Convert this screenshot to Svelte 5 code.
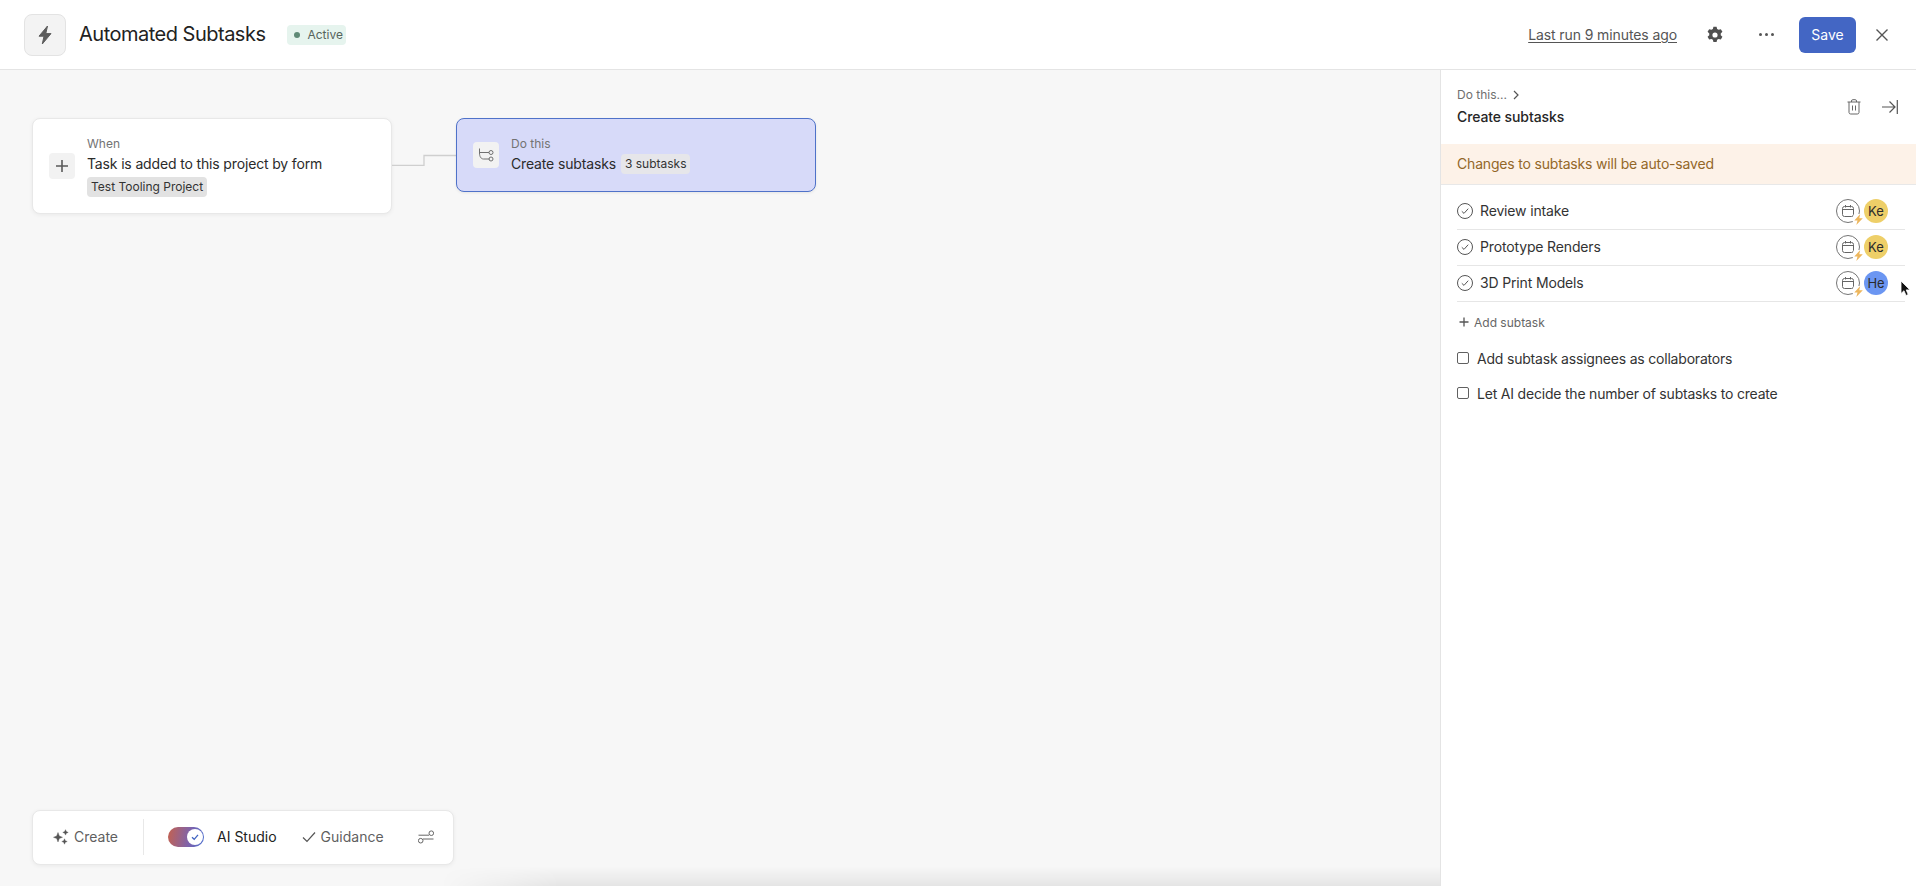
<script>
  const subtasks = [
    { name: 'Review intake', who: 'Ke', color: '#eecf68' },
    { name: 'Prototype Renders', who: 'Ke', color: '#eecf68' },
    { name: '3D Print Models', who: 'He', color: '#6b96f2' }
  ];
  const options = ['Add subtask assignees as collaborators', 'Let AI decide the number of subtasks to create'];
</script>

<div class="page">
  <header class="topbar">
    <div class="app-icon">
      <svg width="18" height="20" viewBox="0 0 18 20"><path d="M11.5 1 3 11.2h5L6.3 19 15 8.6h-5.2z" fill="#5c5c5c" stroke="#5c5c5c" stroke-width="1" stroke-linejoin="round"/></svg>
    </div>
    <h1>Automated Subtasks</h1>
    <span class="badge"><i></i>Active</span>
    <div class="spacer"></div>
    <span class="last-run">Last run 9 minutes ago</span>
    <button class="icon-btn gear" aria-label="Settings">
      <svg width="18" height="18" viewBox="0 0 16 16"><path fill="#4f4f4f" fill-rule="evenodd" d="M6.6.6h2.8l.5 2 1.3.75 2-.57 1.4 2.44-1.5 1.43v1.500l1.500 1.430-1.400 2.440-2-.57-1.300.75-.5 2H6.600l-.5-2-1.300-.75-2 .57-1.400-2.440 1.500-1.430v-1.500L1.400 5.220l1.400-2.440 2 .57 1.300-.75zM8 5.700a2.300 2.300 0 1 0 0 4.600 2.300 2.300 0 0 0 0-4.600z"/></svg>
    </button>
    <button class="icon-btn dots" aria-label="More"><i></i><i></i><i></i></button>
    <button class="save">Save</button>
    <button class="icon-btn close" aria-label="Close">
      <svg width="14" height="14" viewBox="0 0 14 14"><path d="M1.500 1.500l11 11M12.500 1.500l-11 11" stroke="#555" stroke-width="1.400" fill="none"/></svg>
    </button>
  </header>

  <div class="body">
    <main class="canvas">
      <div class="node when">
        <div class="node-icon plus">
          <svg width="14" height="14" viewBox="0 0 14 14"><path d="M7 1v12M1 7h12" stroke="#5a5a5a" stroke-width="1.600"/></svg>
        </div>
        <div class="node-text">
          <div class="label">When</div>
          <div class="main">Task is added to this project by form</div>
          <span class="tag">Test Tooling Project</span>
        </div>
      </div>

      <svg class="wire" width="65" height="12" viewBox="0 0 65 12"><path d="M0 11.500H32V1.500H65" fill="none" stroke="#cfcfcf" stroke-width="1.300"/></svg>

      <div class="node action">
        <div class="node-icon">
          <svg width="16" height="16" viewBox="0 0 16 16" fill="none" stroke="#707070" stroke-width="1"><path d="M1.500 1.500v4.500c0 3.500 1.500 6 4 6h6M1.500 5.500h9.500"/><circle cx="13" cy="5.500" r="2"/><circle cx="13" cy="12" r="2"/></svg>
        </div>
        <div class="node-text">
          <div class="label">Do this</div>
          <div class="main-row">
            <span class="main">Create subtasks</span>
            <span class="tag light">3 subtasks</span>
          </div>
        </div>
      </div>

      <div class="toolbar">
        <span class="tool create">
          <svg width="16" height="16" viewBox="0 0 16 16" fill="#555" stroke="#555" stroke-width=".4"><path d="M5 3.500 6.300 7 9.500 8.300 6.300 9.500 5 13 3.700 9.500.5 8.300 3.700 7zM12.500 .7l.8 1.900 1.900.8-1.900.8-.8 1.900-.8-1.900-1.900-.8 1.900-.8zM11.500 9.800l.8 1.900 1.900.8-1.900.8-.8 1.900-.8-1.900-1.900-.8 1.900-.8z"/></svg>
          Create
        </span>
        <span class="divider"></span>
        <span class="toggle">
          <span class="knob">
            <svg width="10" height="10" viewBox="0 0 10 10"><path d="M2 5.300 4.200 7.300 8 2.800" fill="none" stroke="#3f63c2" stroke-width="1.300"/></svg>
          </span>
        </span>
        <span class="studio">AI Studio</span>
        <span class="tool guidance">
          <svg width="14" height="12" viewBox="0 0 14 12"><path d="M1 6.500 5 10.500 13 1.500" fill="none" stroke="#555" stroke-width="1.200"/></svg>
          Guidance
        </span>
        <svg class="sliders" width="16" height="14" viewBox="0 0 16 14" fill="none" stroke="#666" stroke-width="1"><path d="M.5 5.200H11M5 9h10.500"/><circle cx="13.300" cy="3.200" r="2.300"/><circle cx="2.700" cy="10.700" r="2.300"/></svg>
      </div>

      <div class="bottom-shade"></div>
    </main>

    <aside class="panel">
      <div class="panel-head">
        <div class="head-text">
          <div class="crumb">
            Do this...
            <svg width="8" height="10" viewBox="0 0 8 10"><path d="M2 1l4 4-4 4" fill="none" stroke="#555" stroke-width="1.200"/></svg>
          </div>
          <div class="panel-title">Create subtasks</div>
        </div>
        <div class="panel-actions">
          <svg width="14" height="16" viewBox="0 0 14 16" fill="none" stroke="#666" stroke-width="1"><path d="M.5 3h13M4.500 3V2a1.300 1.300 0 0 1 1.300-1.300h2.400A1.300 1.300 0 0 1 9.500 2v1M2 3v10.500A1.700 1.700 0 0 0 3.700 15h6.600a1.700 1.700 0 0 0 1.700-1.500V3M5.500 6.500v5M8.500 6.500v5"/></svg>
          <svg width="16" height="14" viewBox="0 0 16 14" fill="none" stroke="#555" stroke-width="1.200"><path d="M0 7h12.500M7.500 1.500 13 7l-5.500 5.500M15.300 0v14"/></svg>
        </div>
      </div>
      <div class="notice">Changes to subtasks will be auto-saved</div>

      <ul class="subtasks">
        {#each subtasks as s}
          <li>
            <svg class="check" width="16" height="16" viewBox="0 0 16 16" fill="none" stroke="#555" stroke-width="1"><circle cx="8" cy="8" r="7.500"/><path d="M4.800 8.300 7 10.400l4.200-4.700"/></svg>
            <span class="name">{s.name}</span>
            <span class="date">
              <svg width="12" height="12" viewBox="0 0 12 12" fill="none" stroke="#666" stroke-width="1"><rect x=".5" y="1.500" width="11" height="10" rx="2"/><path d="M.5 4.500h11M3.500 0v2.500M8.500 0v2.500"/></svg>
              <span class="bolt">
                <svg width="9" height="11" viewBox="0 0 9 11"><path d="M6.200 0 .3 6.500h3.200L2.300 11 8.800 4.200H5.300z" fill="#edb65c"/></svg>
              </span>
            </span>
            <span class="avatar" style="background: {s.color}">{s.who}</span>
          </li>
        {/each}
      </ul>

      <div class="add">
        <svg width="10" height="10" viewBox="0 0 10 10"><path d="M5 .5v9M.5 5h9" stroke="#555" stroke-width="1.300"/></svg>
        Add subtask
      </div>

      <div class="options">
        {#each options as o}
          <label><span class="box"></span>{o}</label>
        {/each}
      </div>

      <svg class="cursor" width="11" height="17" viewBox="0 0 11 17"><path d="M1 1v12.500l3-2.800 2 4.800 2.200-1-2-4.600H10z" fill="#111" stroke="#fff" stroke-width=".8"/></svg>
    </aside>
  </div>
</div>

<style>
  :global(body) {
    margin: 0;
    font-family: Inter, "Liberation Sans", sans-serif;
    color: #262626;
  }

  .page {
    height: 886px;
    width: 1916px;
    display: flex;
    flex-direction: column;
    overflow: hidden;
    background: #fff;
  }

  .topbar {
    height: 69px;
    flex: none;
    display: flex;
    align-items: center;
    padding: 0 29px 0 24px;
    background: #fff;
    border-bottom: 1px solid #e4e4e4;
  }

  .app-icon {
    width: 40px;
    height: 40px;
    border: 1px solid #e3e3e3;
    border-radius: 8px;
    background: #f3f3f3;
    display: flex;
    align-items: center;
    justify-content: center;
    margin-right: 13px;
  }

  h1 {
    margin: 0 0 1px;
    font-size: 20px;
    font-weight: 400;
    letter-spacing: -0.5px;
    color: #222;
  }

  .badge {
    margin-left: 22px;
    height: 20px;
    width: 59px;
    box-sizing: border-box;
    padding-left: 7px;
    display: flex;
    align-items: center;
    gap: 7px;
    background: #e6f4ee;
    border-radius: 4px;
    font-size: 12px;
    color: #56635c;
  }

  .badge i {
    width: 6px;
    height: 6px;
    border-radius: 50%;
    background: #5f8a76;
  }

  .spacer {
    flex: 1;
  }

  .last-run {
    font-size: 14px;
    letter-spacing: -0.1px;
    color: #555;
    text-decoration: underline;
    text-underline-offset: 2px;
    margin-right: 29px;
  }

  .icon-btn {
    border: none;
    background: none;
    padding: 0;
    display: flex;
    align-items: center;
    justify-content: center;
  }

  .dots {
    gap: 3px;
    margin-left: 35px;
    margin-right: 25px;
  }

  .dots i {
    width: 3px;
    height: 3px;
    border-radius: 50%;
    background: #555;
  }

  .save {
    width: 57px;
    height: 36px;
    border: none;
    border-radius: 6px;
    background: #4366c4;
    color: #fff;
    font: 14px Inter, sans-serif;
  }

  .close {
    margin-left: 19px;
    margin-right: -2px;
  }

  .body {
    flex: 1;
    display: flex;
    min-height: 0;
  }

  .canvas {
    flex: 1;
    position: relative;
    background: #f7f7f7;
    overflow: hidden;
  }

  .node {
    position: absolute;
    box-sizing: border-box;
    display: flex;
    align-items: center;
    border-radius: 8px;
  }

  .when {
    left: 32px;
    top: 48px;
    width: 360px;
    height: 96px;
    background: #fff;
    border: 1px solid #e8e8e8;
    box-shadow: 0 1px 4px rgba(0, 0, 0, 0.06);
    padding-left: 16px;
  }

  .action {
    left: 456px;
    top: 48px;
    width: 360px;
    height: 74px;
    background: #d7daf9;
    border: 1px solid #4f72c9;
    box-shadow: 0 1px 3px rgba(0, 0, 0, 0.08);
    padding-left: 16px;
  }

  .wire {
    position: absolute;
    left: 392px;
    top: 84px;
  }

  .node-icon {
    width: 26px;
    height: 26px;
    border-radius: 4px;
    background: #f2f2f2;
    display: flex;
    align-items: center;
    justify-content: center;
    margin-right: 12px;
    flex: none;
  }

  .label {
    font-size: 12px;
    color: #737373;
    line-height: 16px;
  }

  .main {
    font-size: 14px;
    letter-spacing: -0.15px;
    color: #2b2b2b;
    line-height: 22px;
  }

  .when .main {
    margin-top: 1px;
  }

  .main-row {
    display: flex;
    align-items: center;
    gap: 5px;
    margin-top: 1px;
  }

  .tag {
    display: inline-block;
    margin-top: 2px;
    padding: 0 4px;
    height: 20px;
    line-height: 20px;
    border-radius: 4px;
    background: #e2e2e2;
    font-size: 12px;
    color: #333;
  }

  .tag.light {
    background: #e6e6ea;
    margin-top: 0;
  }

  .toolbar {
    position: absolute;
    left: 32px;
    top: 740px;
    width: 422px;
    height: 55px;
    box-sizing: border-box;
    display: flex;
    align-items: center;
    background: #fff;
    border: 1px solid #e8e8e8;
    border-radius: 8px;
    box-shadow: 0 1px 4px rgba(0, 0, 0, 0.06);
    padding: 0 0 2px 20px;
    font-size: 14px;
    color: #5f5f5f;
  }

  .tool {
    display: flex;
    align-items: center;
    gap: 5px;
  }

  .divider {
    width: 1px;
    height: 36px;
    background: #e8e8e8;
    margin: 0 24px 0 25px;
  }

  .toggle {
    width: 36px;
    height: 20px;
    border-radius: 10px;
    background: linear-gradient(100deg, #c4614f, #7d63ad 60%, #4a6fd0);
    position: relative;
    flex: none;
  }

  .knob {
    position: absolute;
    right: 1px;
    top: 2px;
    width: 16px;
    height: 16px;
    border-radius: 50%;
    background: #fff;
    display: flex;
    align-items: center;
    justify-content: center;
  }

  .studio {
    margin-left: 13px;
    color: #222;
  }

  .guidance {
    margin-left: 25px;
  }

  .sliders {
    margin-left: 34px;
  }

  .bottom-shade {
    position: absolute;
    left: 0;
    right: 0;
    bottom: 0;
    height: 20px;
    pointer-events: none;
    background: linear-gradient(to bottom, rgba(0, 0, 0, 0), rgba(0, 0, 0, 0.07));
    -webkit-mask-image: linear-gradient(to right, transparent 440px, #000 560px);
    mask-image: linear-gradient(to right, transparent 440px, #000 560px);
  }

  .panel {
    width: 476px;
    flex: none;
    box-sizing: border-box;
    border-left: 1px solid #e4e4e4;
    background: #fff;
    position: relative;
  }

  .panel-head {
    height: 74px;
    box-sizing: border-box;
    display: flex;
    align-items: center;
    justify-content: space-between;
    padding: 0 18px 0 16px;
  }

  .head-text {
    padding-top: 2px;
  }

  .crumb {
    display: flex;
    align-items: center;
    gap: 5px;
    font-size: 12px;
    color: #6f6f6f;
    line-height: 20px;
    margin-top: -3px;
  }

  .panel-title {
    font-size: 14px;
    font-weight: 500;
    letter-spacing: -0.1px;
    color: #262626;
    line-height: 22px;
    margin-top: 1px;
  }

  .panel-actions {
    display: flex;
    align-items: center;
    gap: 21px;
  }

  .notice {
    height: 41px;
    box-sizing: border-box;
    display: flex;
    align-items: center;
    padding: 0 0 2px 16px;
    background: #fdf2e8;
    border-bottom: 1px solid #e8e8e8;
    font-size: 14px;
    letter-spacing: -0.18px;
    color: #936728;
  }

  .subtasks {
    list-style: none;
    margin: 9px 11px 0 16px;
    padding: 0;
  }

  .subtasks li {
    height: 36px;
    box-sizing: border-box;
    display: flex;
    align-items: center;
    padding-bottom: 2px;
    border-bottom: 1px solid #e6e6e6;
    font-size: 14px;
    letter-spacing: -0.15px;
    color: #333;
  }

  .name {
    margin-left: 7px;
    flex: 1;
  }

  .date {
    position: relative;
    width: 22px;
    height: 22px;
    border: 1px solid #757575;
    border-radius: 50%;
    display: flex;
    align-items: center;
    justify-content: center;
    margin-right: 4px;
  }

  .bolt {
    position: absolute;
    right: -4px;
    bottom: -4px;
    width: 10px;
    height: 12px;
    display: flex;
    align-items: center;
    justify-content: center;
    background: #fff;
    border-radius: 3px;
  }

  .avatar {
    width: 24px;
    height: 24px;
    border-radius: 50%;
    display: flex;
    align-items: center;
    justify-content: center;
    font-size: 13px;
    letter-spacing: 0;
    color: #2b2b2b;
    margin-right: 17px;
  }

  .add {
    display: flex;
    align-items: center;
    gap: 5px;
    margin: 10px 0 0 18px;
    height: 20px;
    font-size: 12px;
    color: #666;
  }

  .options {
    margin: 15px 0 0 16px;
    display: flex;
    flex-direction: column;
    gap: 13px;
  }

  label {
    display: flex;
    align-items: center;
    height: 22px;
    font-size: 14px;
    letter-spacing: -0.2px;
    color: #333;
  }

  .box {
    width: 12px;
    height: 12px;
    box-sizing: border-box;
    border: 1px solid #606060;
    border-radius: 2px;
    margin-right: 8px;
  }

  .cursor {
    position: absolute;
    left: 459px;
    top: 210px;
  }
</style>
